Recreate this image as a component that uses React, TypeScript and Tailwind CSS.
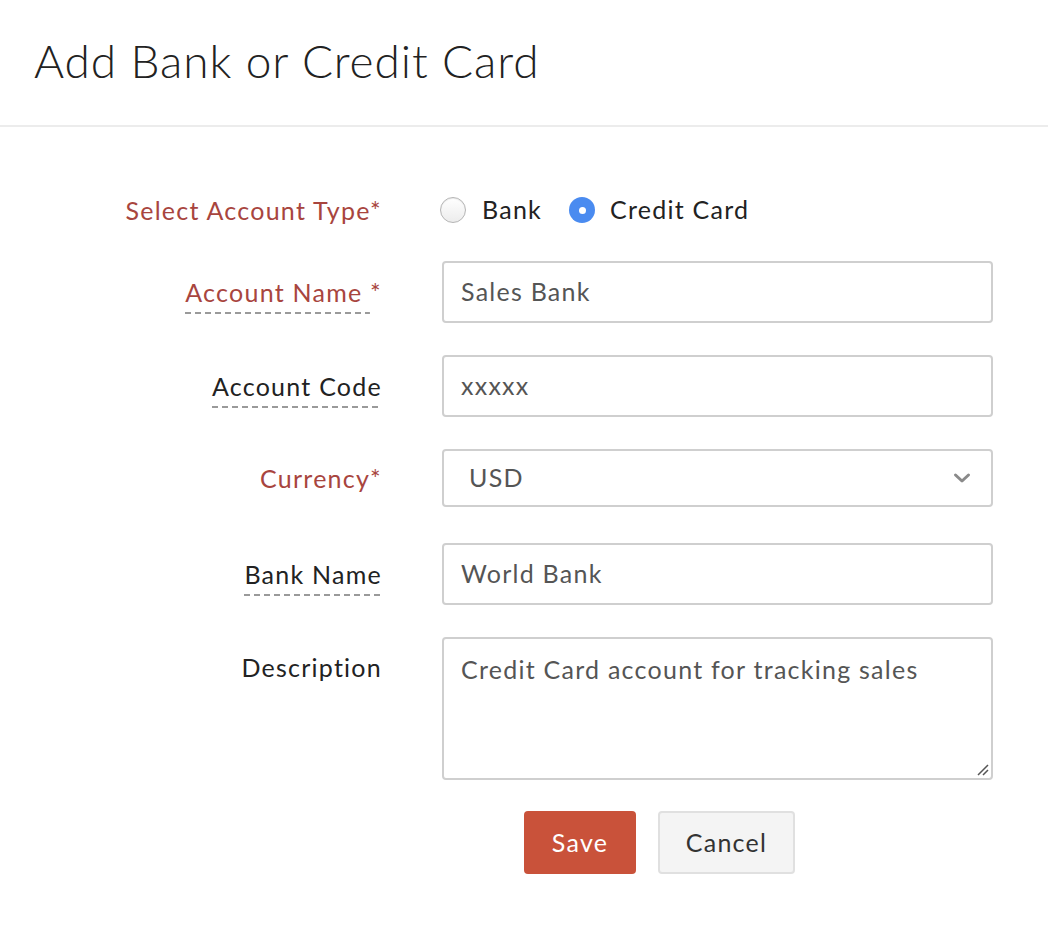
import { useState } from 'react';

const font = { fontFamily: 'Lato, "Open Sans", sans-serif' };

const dashed =
  'bg-[repeating-linear-gradient(to_right,#9a9a9a_0_6px,transparent_6px_10px)] bg-[length:100%_2px] bg-bottom bg-no-repeat pb-[7px]';

function Label({ text, required, underline }: { text: string; required?: boolean; underline?: boolean }) {
  const color = required ? 'text-[#a8453e]' : 'text-[#222]';
  return (
    <div className={`w-[382px] shrink-0 text-right text-[25px] leading-[30px] tracking-[0.05em] ${color}`}>
      {underline ? <span className={dashed}>{required ? text + ' ' : text}</span> : <span>{text}</span>}
      {required && <span>*</span>}
    </div>
  );
}

function Radio({ checked }: { checked?: boolean }) {
  if (checked) {
    return (
      <span className="flex h-[26px] w-[26px] items-center justify-center rounded-full bg-[#4a8bf0]">
        <span className="h-[7px] w-[7px] rounded-full bg-white" />
      </span>
    );
  }
  return <span className="h-[26px] w-[26px] rounded-full border border-[#b5b5b5] bg-gradient-to-b from-white to-[#ececec] shadow-[inset_0_1px_1px_rgba(0,0,0,0.08)]" />;
}

const field =
  'ml-[60px] flex w-[551px] items-center rounded-[4px] border-2 border-[#cfcfcf] text-[25px] tracking-[0.05em] text-[#555]';

export default function App() {
  const [type, setType] = useState('card');

  return (
    <div className="min-h-[940px] w-[1048px] bg-white" style={font}>
      <div className="flex h-[127px] items-center border-b-2 border-[#ececec] pl-[34px]">
        <h1 className="pb-[4px] text-[46px] font-light tracking-[0.02em] text-[#222]">Add Bank or Credit Card</h1>
      </div>

      <div className="pt-[63px]">
        <div className="flex h-[40px] items-center">
          <Label text="Select Account Type" required />
          <div className="ml-[58px] flex items-center text-[25px] tracking-[0.05em] text-[#222]">
            <button className="flex items-center gap-[16px] tracking-[0.05em]" onClick={() => setType('bank')}>
              <Radio checked={type === 'bank'} />
              <span>Bank</span>
            </button>
            <button className="ml-[27px] flex items-center gap-[15px] tracking-[0.05em]" onClick={() => setType('card')}>
              <Radio checked={type === 'card'} />
              <span>Credit Card</span>
            </button>
          </div>
        </div>

        <div className="mt-[31px] flex flex-col gap-[32px]">
          <div className="flex h-[62px] items-center">
            <Label text="Account Name" required underline />
            <div className={`${field} h-[62px] px-[17px]`}>Sales Bank</div>
          </div>

          <div className="flex h-[62px] items-center">
            <Label text="Account Code" underline />
            <div className={`${field} h-[62px] px-[17px]`}>xxxxx</div>
          </div>

          <div className="flex h-[62px] items-start">
            <div className="flex h-[58px] items-center">
              <Label text="Currency" required />
            </div>
            <div className={`${field} h-[58px] justify-between pl-[25px] pr-[20px] text-[#444]`}>
              <span>USD</span>
              <svg width="18" height="12" viewBox="0 0 18 12" fill="none">
                <path d="M2.5 3 L9 9 L15.5 3" stroke="#8a8a8a" strokeWidth="3" strokeLinecap="round" strokeLinejoin="round" />
              </svg>
            </div>
          </div>

          <div className="flex h-[62px] items-center">
            <Label text="Bank Name" underline />
            <div className={`${field} h-[62px] px-[17px]`}>World Bank</div>
          </div>

          <div className="flex items-start">
            <div className="pt-[15px]">
              <Label text="Description" />
            </div>
            <div className={`${field} relative h-[143px] items-start px-[17px] pt-[15px] leading-[30px]`}>
              Credit Card account for tracking sales
              <svg className="absolute bottom-[2px] right-[2px]" width="14" height="14" viewBox="0 0 14 14">
                <path d="M13 3 L3 13 M13 8 L8 13" stroke="#555" strokeWidth="1.5" />
              </svg>
            </div>
          </div>
        </div>

        <div className="mt-[31px] flex gap-[22px] pl-[524px] text-[25px] tracking-[0.05em]">
          <button className="h-[63px] w-[112px] rounded-[4px] bg-[#c9523a] tracking-[0.05em] text-white">Save</button>
          <button className="h-[63px] w-[137px] rounded-[4px] border-2 border-[#e0e0e0] bg-[#f4f4f4] tracking-[0.05em] text-[#333]">
            Cancel
          </button>
        </div>
      </div>
    </div>
  );
}
